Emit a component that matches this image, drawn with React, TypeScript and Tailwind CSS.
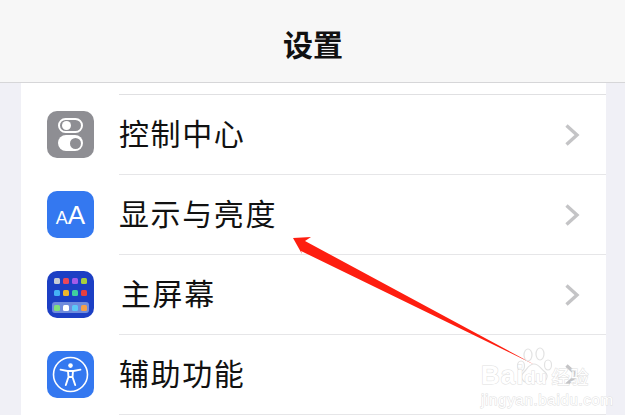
import React from 'react';

const CJK = 'font-["Noto_Sans_CJK_SC","Noto_Sans",sans-serif]';

const Chevron = () => (
  <svg width="16" height="24" viewBox="0 0 16 24" fill="none" className="shrink-0">
    <path d="M2.5 2.5 L13 12 L2.5 21.5" stroke="#c4c4c6" strokeWidth="3.4" strokeLinecap="butt" strokeLinejoin="miter" />
  </svg>
);

const ControlIcon = () => (
  <div className="w-[47px] h-[47px] rounded-[10px] bg-[#8e8e93] flex flex-col items-center justify-center gap-[2px]">
    <div className="w-[25px] h-[15px] rounded-full border-2 border-white flex items-center pl-[2px]">
      <div className="w-[9px] h-[9px] rounded-full bg-white" />
    </div>
    <div className="w-[25px] h-[16px] rounded-full bg-white flex items-center justify-end pr-[2px]">
      <div className="w-[11px] h-[11px] rounded-full bg-[#8e8e93]" />
    </div>
  </div>
);

const DisplayIcon = () => (
  <div className="w-[47px] h-[47px] rounded-[10px] bg-[#3478f0] flex items-center justify-center">
    <span className='font-["Liberation_Sans",sans-serif] text-white leading-none'>
      <span className="text-[18px]">A</span>
      <span className="text-[26px]">A</span>
    </span>
  </div>
);

const homeDots = ['#c9ccd4', '#e8485a', '#a35be8', '#a6cf3f', '#45b0f5', '#f0b52c', '#3fcf9f', '#e63f3f'];
const dockDots = ['#7fe07a', '#ffffff', '#5cc8f8', '#f5a04a'];

const HomeIcon = () => (
  <div className="w-[47px] h-[47px] rounded-[10px] bg-[#1c3fc4] flex flex-col items-center pt-[7px]">
    <div className="grid grid-cols-4 gap-x-[3px] gap-y-[6px]">
      {homeDots.map((c, i) => (
        <div key={i} className="w-[6px] h-[6px] rounded-[1.5px]" style={{ backgroundColor: c }} />
      ))}
    </div>
    <div className="mt-[6px] w-[37px] h-[11px] rounded-[3px] bg-[#6f8bdc] flex items-center justify-center gap-[3px]">
      {dockDots.map((c, i) => (
        <div key={i} className="w-[6px] h-[6px] rounded-[1.5px]" style={{ backgroundColor: c }} />
      ))}
    </div>
  </div>
);

const AccessIcon = () => (
  <div className="w-[47px] h-[47px] rounded-[10px] bg-[#3478f0] flex items-center justify-center">
    <svg width="37" height="37" viewBox="0 0 37 37" fill="none">
      <circle cx="18.5" cy="18.5" r="17" stroke="white" strokeWidth="1.6" />
      <circle cx="18.5" cy="9.6" r="2.3" fill="white" />
      <path d="M8.5 13.6 L15.5 15 L21.5 15 L28.5 13.6" stroke="white" strokeWidth="1.8" strokeLinecap="round" />
      <path d="M16 15 L16.5 21 L13.8 29 M21 15 L20.5 21 L23.2 29 M16.5 21 L20.5 21" stroke="white" strokeWidth="1.9" strokeLinecap="round" />
    </svg>
  </div>
);

const rows = [
  { label: '控制中心', icon: <ControlIcon />, indent: 'ml-0' },
  { label: '显示与亮度', icon: <DisplayIcon />, indent: 'ml-0' },
  { label: '主屏幕', icon: <HomeIcon />, indent: 'ml-[2px]' },
  { label: '辅助功能', icon: <AccessIcon />, indent: 'ml-0' },
];

export default function App() {
  return (
    <div className={`relative w-[625px] h-[415px] overflow-hidden bg-[#f0f0f6] ${CJK}`}>
      {/* Header */}
      <div className="h-[83px] bg-[#f7f7f7] border-b border-[#d6d6d8] flex items-center justify-center">
        <h1 className="text-[30px] font-bold text-[#111] leading-none pt-[4px] pl-[1px]">设置</h1>
      </div>

      {/* List */}
      <div className="mx-[21px] w-[585px] bg-white">
        <div className="ml-[98px] h-[12px] border-b border-[#e0e0e2]" />
        {rows.map((row) => (
          <div key={row.label} className="flex h-[80px] pl-[26px]">
            <div className="mt-[16px]">{row.icon}</div>
            <div className="ml-[25px] flex-1 h-full border-b border-[#e6e6e8] flex items-center justify-between pr-[26px]">
              <span className={`text-[30px] leading-none text-[#111] tracking-[1.6px] pb-[6px] ${row.indent}`}>{row.label}</span>
              <Chevron />
            </div>
          </div>
        ))}
      </div>

      {/* Red annotation arrow */}
      <svg className="absolute inset-0 pointer-events-none" width="625" height="415" viewBox="0 0 625 415">
        <polygon points="293,238 311,237 305,241 535,365 301,251 302,254" fill="#fe1e10" />
      </svg>

      {/* Watermark */}
      <svg className="absolute left-[516px] top-[346px] pointer-events-none" width="40" height="40" viewBox="0 0 40 40" fill="white" stroke="#e2e2e2" strokeWidth="1.2">
        <ellipse cx="5" cy="20" rx="3.5" ry="5" />
        <ellipse cx="12" cy="9" rx="4" ry="6" />
        <ellipse cx="24" cy="8" rx="4" ry="6" />
        <ellipse cx="32" cy="19" rx="3.5" ry="5" />
        <path d="M18 18 C23 18 25 23 29 26 C34 31 29 37 24 36 C20 35 16 35 12 36 C7 37 3 31 8 26 C11 23 13 18 18 18 Z" />
      </svg>
      <div className="absolute left-[481px] top-[362px] flex flex-col items-start text-white pointer-events-none [-webkit-text-stroke:1px_#e0e0e0] [paint-order:stroke_fill]">
        <div className="flex items-baseline leading-none">
          <span className='font-["Liberation_Sans",sans-serif] font-bold text-[26px] tracking-[1px]'>Bai</span>
          <span className='font-["Liberation_Sans",sans-serif] font-bold text-[18px]'>du</span>
          <span className="ml-[5px] text-[18px] tracking-[1px]">经验</span>
        </div>
        <span className='font-["Liberation_Sans",sans-serif] text-[15px] leading-none mt-[4px] tracking-[0.7px]'>jingyan.baidu.com</span>
      </div>
    </div>
  );
}
